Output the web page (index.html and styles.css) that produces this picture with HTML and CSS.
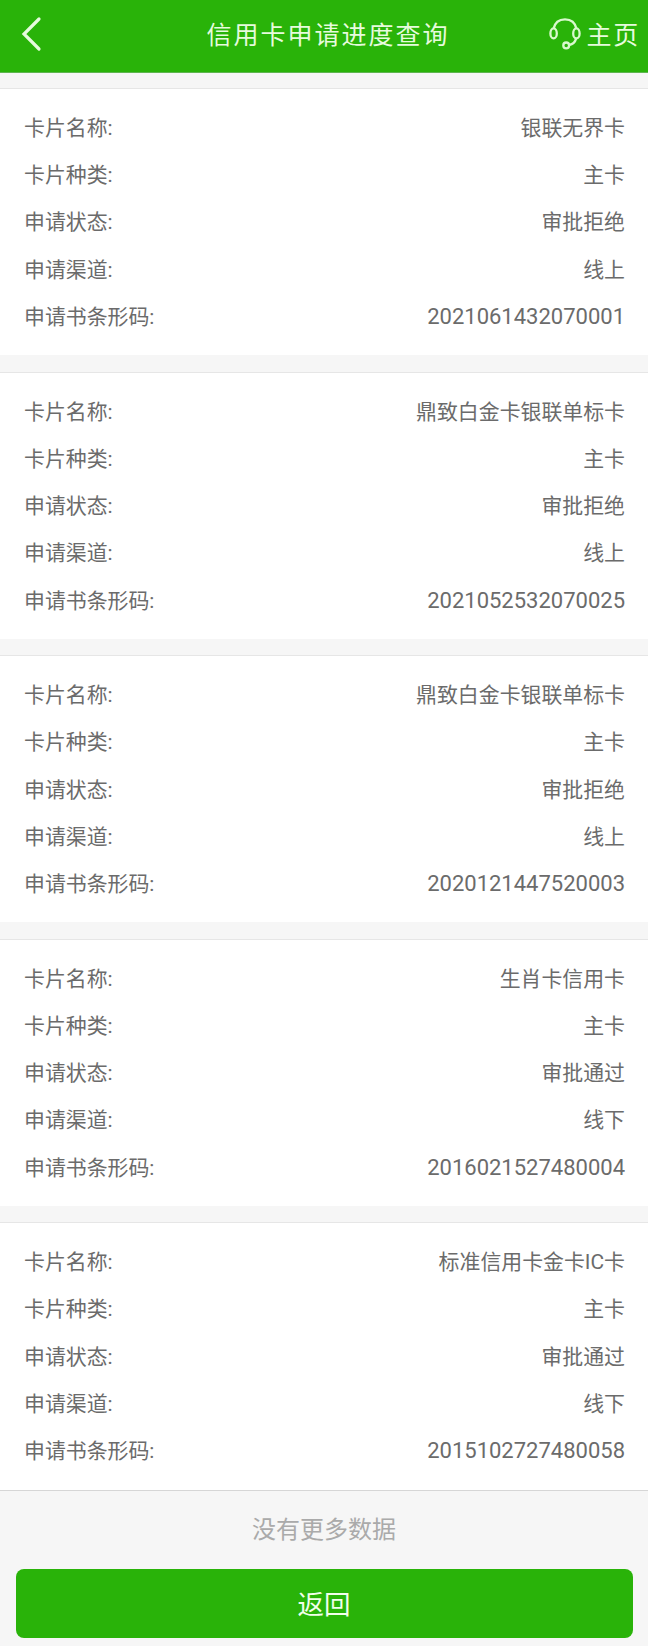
FILE: index.html
```html
<!DOCTYPE html>
<html lang="zh-CN">
<head>
    <meta charset="UTF-8">
    <meta name="viewport" content="width=device-width, initial-scale=1.0">
    <title>信用卡申请进度查询</title>
    <link rel="stylesheet" href="styles.css">
</head>
<body>
    <header class="header">
        <a class="back" href="#">
            <svg width="24" height="36" viewBox="0 0 24 36"><path d="M19 3 L4 18 L19 33" fill="none" stroke="#e6fbdd" stroke-width="3.2" stroke-linecap="round"/></svg>
        </a>
        <h1 class="title">信用卡申请进度查询</h1>
        <a class="home" href="#">
            <svg width="34" height="34" viewBox="0 0 34 34" fill="none" stroke="#d9f9cd" stroke-width="2.3">
                <path d="M5.4 12 C6.8 5.8 11.2 2.4 17 2.4 C22.8 2.4 27.2 5.8 28.6 12"/>
                <ellipse cx="5.6" cy="16.4" rx="3.2" ry="5"/>
                <ellipse cx="28.4" cy="16.4" rx="3.2" ry="5"/>
                <path d="M28.2 21.4 C27.2 25 24.6 27.4 21.2 28"/>
                <circle cx="18.2" cy="28.4" r="2.9"/>
            </svg>
            <span class="home-text">主页</span>
        </a>
    </header>

    <main class="list">
        <section class="card">
            <div class="row"><span>卡片名称:</span><span>银联无界卡</span></div>
            <div class="row"><span>卡片种类:</span><span>主卡</span></div>
            <div class="row"><span>申请状态:</span><span>审批拒绝</span></div>
            <div class="row"><span>申请渠道:</span><span>线上</span></div>
            <div class="row"><span>申请书条形码:</span><span class="code">2021061432070001</span></div>
        </section>
        <section class="card">
            <div class="row"><span>卡片名称:</span><span>鼎致白金卡银联单标卡</span></div>
            <div class="row"><span>卡片种类:</span><span>主卡</span></div>
            <div class="row"><span>申请状态:</span><span>审批拒绝</span></div>
            <div class="row"><span>申请渠道:</span><span>线上</span></div>
            <div class="row"><span>申请书条形码:</span><span class="code">2021052532070025</span></div>
        </section>
        <section class="card">
            <div class="row"><span>卡片名称:</span><span>鼎致白金卡银联单标卡</span></div>
            <div class="row"><span>卡片种类:</span><span>主卡</span></div>
            <div class="row"><span>申请状态:</span><span>审批拒绝</span></div>
            <div class="row"><span>申请渠道:</span><span>线上</span></div>
            <div class="row"><span>申请书条形码:</span><span class="code">2020121447520003</span></div>
        </section>
        <section class="card">
            <div class="row"><span>卡片名称:</span><span>生肖卡信用卡</span></div>
            <div class="row"><span>卡片种类:</span><span>主卡</span></div>
            <div class="row"><span>申请状态:</span><span>审批通过</span></div>
            <div class="row"><span>申请渠道:</span><span>线下</span></div>
            <div class="row"><span>申请书条形码:</span><span class="code">2016021527480004</span></div>
        </section>
        <section class="card">
            <div class="row"><span>卡片名称:</span><span>标准信用卡金卡IC卡</span></div>
            <div class="row"><span>卡片种类:</span><span>主卡</span></div>
            <div class="row"><span>申请状态:</span><span>审批通过</span></div>
            <div class="row"><span>申请渠道:</span><span>线下</span></div>
            <div class="row"><span>申请书条形码:</span><span class="code">2015102727480058</span></div>
        </section>
    </main>

    <p class="no-more">没有更多数据</p>
    <button class="return-btn" type="button">返回</button>
</body>
</html>
```

FILE: styles.css
```css
* {
    box-sizing: border-box;
}
body {
    margin: 0;
    min-height: 1646px;
    background: #f6f6f6;
    color: #6b6b6b;
    font-family: Roboto, "Noto Sans CJK SC", sans-serif;
    font-size: 20.9px;
}
.header {
    display: grid;
    grid-template-columns: 120px 1fr 120px;
    align-items: center;
    height: 73px;
    padding: 0 8px 4px 20px;
    background: #29b309;
    border-bottom: 1px solid #5fb550;
}
.back,
.home {
    display: flex;
    align-items: center;
    color: #e6fbdd;
    text-decoration: none;
}
.title {
    margin: 0;
    padding: 0 4px 3px 0;
    color: #e6fbdd;
    font-family: KaiTi, STKaiti, "Noto Sans CJK SC", serif;
    font-size: 25px;
    font-weight: 400;
    letter-spacing: 2px;
    text-align: center;
    white-space: nowrap;
}
.home {
    justify-content: flex-end;
    gap: 4px;
}
.home-text {
    padding-bottom: 2px;
    font-family: KaiTi, STKaiti, "Noto Sans CJK SC", serif;
    font-size: 25px;
    font-weight: 400;
    letter-spacing: 1.8px;
    white-space: nowrap;
}
.list {
    display: flex;
    flex-direction: column;
    gap: 16.35px;
    padding-top: 15px;
    border-bottom: 1px solid #d6d6d6;
}
.card {
    padding: 15.3px 23px 14.7px 24px;
    background: #fff;
    border-top: 1px solid #e6e6e6;
}
.row {
    display: flex;
    align-items: center;
    justify-content: space-between;
    height: 47.25px;
    line-height: 30px;
}
.code {
    font-size: 22px;
}
.no-more {
    margin: 0;
    padding-top: 21px;
    height: 78px;
    color: #aaa;
    font-size: 24px;
    line-height: 36px;
    text-align: center;
}
.return-btn {
    display: block;
    width: 617px;
    height: 69px;
    margin: 0 auto;
    padding: 0 0 2px;
    background: #29b309;
    border: none;
    border-radius: 8px;
    color: #f1ffeb;
    font-family: inherit;
    font-size: 26.5px;
}
```
